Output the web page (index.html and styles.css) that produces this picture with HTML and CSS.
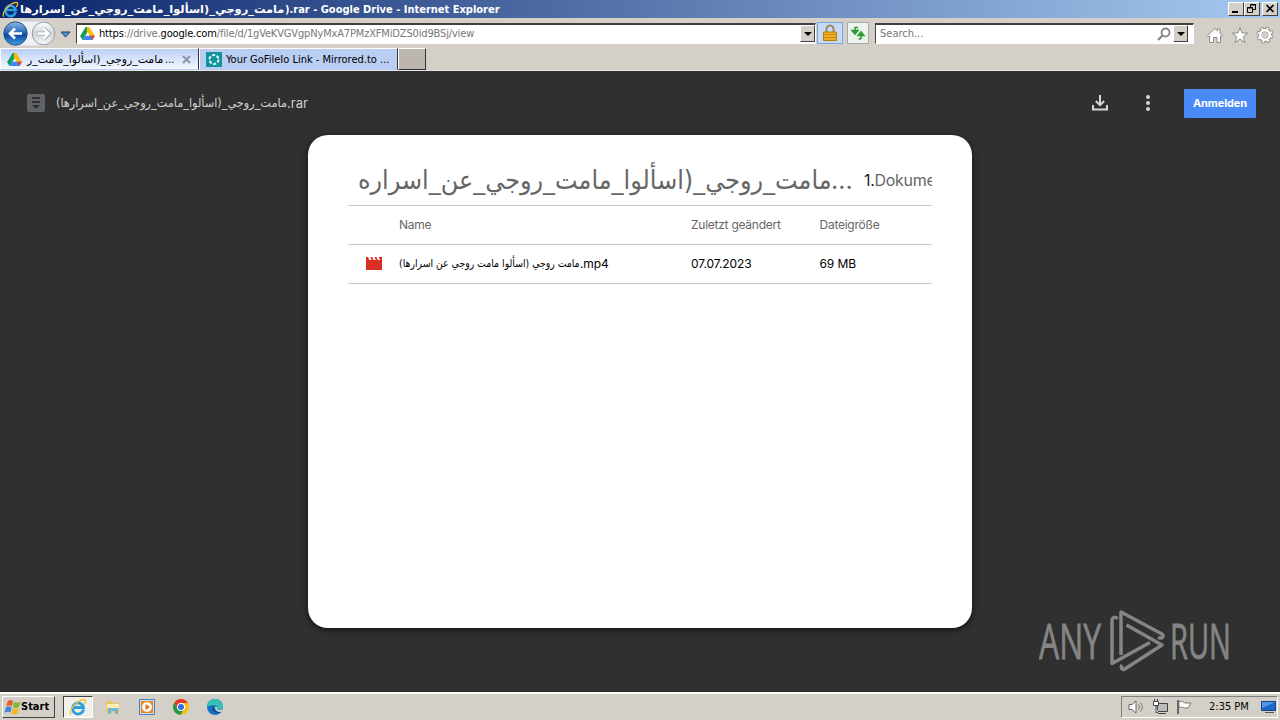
FILE: index.html
```
<!DOCTYPE html>
<html lang="de">
<head>
    <meta charset="UTF-8">
    <meta name="viewport" content="width=device-width, initial-scale=1.0">
    <title>Google Drive</title>
    <link rel="stylesheet" href="styles.css">
</head>
<body>
    <svg width="0" height="0" class="defs">
        <symbol id="drive" viewBox="0 0 16 14">
            <path d="M8 0C6 0 5.500.500 5 1.500L0 10l2.700 4L8 5.500z" fill="#109d58"/>
            <path d="M8 0c2 0 2.500.500 3 1.500L16 10h-5.300L7 3.500z" fill="#fbbc04"/>
            <path d="M4.800 9.500H16L13.300 14H2.700z" fill="#4285f4"/>
            <path d="M13.300 14 16 9.500h-5.300z" fill="#ea4335"/>
        </symbol>
        <symbol id="ie" viewBox="0 0 18 18">
            <path d="M14.500 11.500A5.500 5.500 0 1 1 14.500 9.500H5" fill="none" stroke="#2a9fe0" stroke-width="2.800"/>
            <path d="M2 16.500C-1 13 8 2 15 1.500c3 0 1 4 0 5" fill="none" stroke="#f2c230" stroke-width="1.300"/>
        </symbol>
    </svg>

    <header class="titlebar">
        <svg class="title-icon" width="17" height="17"><use href="#ie"/></svg>
        <span class="title-text"><span class="title-name"><bdi class="stretch" dir="rtl">مامت_روجي_(اسألوا_مامت_روجي_عن_اسرارها</bdi></span><span class="title-app">).rar - Google Drive - Internet Explorer</span></span>
        <div class="win-buttons">
            <span class="win-btn"><svg width="14" height="11"><path d="M3 8h6v2H3z"/></svg></span>
            <span class="win-btn"><svg width="14" height="11"><path d="M5.500 4V1.500h5v5H8M5 2h6M2.500 4.500h5v5h-5zM2 5h6" fill="none" stroke="#000"/></svg></span>
            <span class="win-btn close"><svg width="14" height="11"><path d="m3.500 2 7 7m0-7-7 7" stroke="#000" stroke-width="1.600"/></svg></span>
        </div>
    </header>

    <nav class="navbar">
        <svg class="nav-arrows" width="76" height="27">
            <defs><linearGradient id="blue" x2="0" y2="1"><stop stop-color="#8db9ea"/><stop offset=".5" stop-color="#1e5fb4"/><stop offset=".55" stop-color="#0d469b"/><stop offset="1" stop-color="#3fa0ec"/></linearGradient>
            <linearGradient id="grey" x2="0" y2="1"><stop stop-color="#fff"/><stop offset=".5" stop-color="#cfd4da"/><stop offset="1" stop-color="#f5f7fa"/></linearGradient></defs>
            <path d="M15 1.500h28a12 12 0 0 1 0 24H15z" fill="#edf0f4"/>
            <circle cx="15.500" cy="13.500" r="11.700" fill="url(#blue)" stroke="#29527f"/>
            <path d="M22 13.500H10m5-5-5 5 5 5" fill="none" stroke="#fff" stroke-width="2.700"/>
            <circle cx="43.500" cy="13.500" r="11.300" fill="url(#grey)" stroke="#8f99a5"/>
            <path d="M37 13.500h12m-5-5 5 5-5 5" fill="none" stroke="#a7b0ba" stroke-width="3.800"/>
            <path d="M37.500 13.500h11m-5-5 5 5-5 5" fill="none" stroke="#fff" stroke-width="2.400"/>
            <path d="M61 12h9l-4.500 5z" fill="#4c95d4" stroke="#1f3f66"/>
        </svg>
        <div class="field address">
            <svg width="15" height="13"><use href="#drive"/></svg>
            <span class="url"><b>https</b>://drive.<b>google.com</b>/file/d/1gVeKVGVgpNyMxA7PMzXFMiDZS0id9BSj/view</span>
            <span class="drop"></span>
        </div>
        <span class="lock"><svg width="14" height="18"><path d="M3.500 9V5a3.500 3.500 0 0 1 7 0v4" fill="none" stroke="#a08a58" stroke-width="2"/><path d="M.500 8h13v8.500H.500z" fill="#eeae20" stroke="#b57c10"/><path d="M1 10.500h12M1 13.500h12" stroke="#c98c12"/></svg></span>
        <span class="refresh"><svg width="18" height="18"><path d="M6 3.500h3M6 3v5M3 6.500 6 10l3-3.500zM12 15H9.500M12 15v-5M9 11.500 12 8l3 3.500z" fill="#2c9a37" stroke="#2c9a37" stroke-width="1.500"/></svg></span>
        <div class="field search">
            <span class="placeholder">Search...</span>
            <svg width="14" height="14"><circle cx="8.500" cy="5.500" r="4" fill="none" stroke="#858585" stroke-width="1.800"/><path d="M5.500 8.500 1 13" stroke="#858585" stroke-width="2.200"/></svg>
            <span class="drop"></span>
        </div>
        <div class="tools">
            <svg width="18" height="18"><path d="m1.500 9.500 7.500-7 2.500 2.300V3H14v4.200l2.500 2.300-1 1.200-1-.8v6.600H11V11.500H7.500v5H3.700V9.900l-1 .8z" fill="#fff" stroke="#8c8c8c"/></svg>
            <svg width="18" height="18"><path d="m9 1.500 2 5.500h5.800l-4.600 3.600 1.700 5.900L9 13l-4.900 3.500 1.700-5.900L1.200 7H7z" fill="#fff" stroke="#8c8c8c"/></svg>
            <svg width="18" height="18"><g fill="none"><circle cx="9" cy="9" r="6.500" stroke="#8c8c8c" stroke-width="4" stroke-dasharray="3 2.105"/><circle cx="9" cy="9" r="5" stroke="#8c8c8c" stroke-width="4"/><circle cx="9" cy="9" r="6.300" stroke="#fff" stroke-width="2.800" stroke-dasharray="1.700 3.248" stroke-dashoffset="-.6"/><circle cx="9" cy="9" r="4.700" stroke="#fff" stroke-width="2.600"/></g></svg>
        </div>
    </nav>

    <div class="tabs">
        <div class="tab active">
            <svg width="15" height="13"><use href="#drive"/></svg>
            <span class="tab-arabic"><bdi class="stretch" dir="rtl">مامت_روجي_(اسألوا_مامت_ر</bdi></span><span class="dots">...</span>
            <svg class="tab-close" width="9" height="9"><path d="m1 1 7 7m0-7L1 8" stroke="#8d96a8" stroke-width="2"/></svg>
        </div>
        <div class="tab">
            <svg width="16" height="15"><path d="M0 0h16v15H0z" fill="#14929c"/><circle cx="8" cy="7.500" r="4.500" fill="none" stroke="#e3ffff" stroke-width="2" stroke-dasharray="3 1.700"/></svg>
            <span class="tab-label">Your GoFileIo Link - Mirrored.to ...</span>
        </div>
        <div class="new-tab"></div>
    </div>

    <main class="viewer">
        <div class="viewer-bar">
            <svg width="18" height="18"><rect width="18" height="18" rx="2" fill="#5f6368"/><path d="M5 4h8M5 8h8" stroke="#303030" stroke-width="2"/><path d="M5 11h8l-4 4z" fill="#303030"/></svg>
            <span class="file-title"><bdi class="stretch" dir="rtl">مامت_روجي_(اسألوا_مامت_روجي_عن_اسرارها)</bdi></span><span class="file-ext">.rar</span>
            <svg class="download" width="18" height="18"><path d="M9 1v10M4.800 7 9 11.200 13.200 7M2 11v4.500h14V11" fill="none" stroke="#d6d6d6" stroke-width="2"/></svg>
            <svg class="more" width="6" height="18"><g fill="#d6d6d6"><circle cx="3" cy="3" r="2"/><circle cx="3" cy="9" r="2"/><circle cx="3" cy="15" r="2"/></g></svg>
            <button class="login">Anmelden</button>
        </div>

        <section class="card">
            <div class="card-head">
                <span class="card-title"><bdi class="stretch" dir="rtl">مامت_روجي_(اسألوا_مامت_روجي_عن_اسراره</bdi></span><span class="card-dots">...</span>
                <span class="doc-count"><span class="num">1.</span>Dokumente</span>
            </div>
            <div class="row head">
                <span></span><span class="name">Name</span><span>Zuletzt geändert</span><span>Dateigröße</span>
            </div>
            <div class="row">
                <svg width="16" height="13"><path d="M0 0h2l1.500 3H5.700L4.200 0h2l1.500 3h2.200L8.400 0h2l1.500 3h2.200L12.600 0H16v13H0z" fill="#d93025"/></svg>
                <span class="name"><span class="row-arabic"><bdi class="stretch" dir="rtl">مامت روجي (اسألوا مامت روجي عن اسرارها)</bdi></span>.mp4</span><span>07.07.2023</span><span>69 MB</span>
            </div>
        </section>

        <svg class="watermark" width="194" height="64" viewBox="0 0 194 64">
            <text x="0" y="50" textLength="62" lengthAdjust="spacingAndGlyphs">ANY</text>
            <g fill="none" stroke="#858585" stroke-width="3.500" stroke-linejoin="round">
                <path d="M78.500 10c-2-3-5.500-2-5.500 2v42.500l38-21"/>
                <path d="M82 46V3l41 22c3 3-1 5-4 3.500"/>
                <path d="M87.500 16 123 36 85 60.500c-3 0-3-3-2-4.500"/>
            </g>
            <text x="131" y="50" textLength="61" lengthAdjust="spacingAndGlyphs">RUN</text>
        </svg>
    </main>

    <footer class="taskbar">
        <div class="start">
            <svg width="17" height="16" viewBox="0 0 15 15"><path d="M3 2q3-2 5 0L7 7Q4 5 1.500 7z" fill="#e8612c"/><path d="M9 2.500q3 2 6 0L13.500 7.500q-3 2-5.500 0z" fill="#7db838"/><path d="M1.300 8Q4 6 6.700 8l-1.200 5Q3 11 0 13z" fill="#3e86d8"/><path d="M7.800 8.500q3 2 5.500 0L12 13.500q-3 2-5.500 0z" fill="#f4b81f"/></svg>
            Start
        </div>
        <div class="task-active"><svg width="18" height="18"><use href="#ie"/></svg></div>
        <div class="quick">
            <svg width="16" height="16"><path d="M1 2h6l1 2h6v10H1z" fill="#e9c961"/><path d="M2 5h12v4H2z" fill="#fbeeb0"/><path d="M3 15V9h10v6h-3v-3H6v3z" fill="#6db6dc"/></svg>
            <svg width="16" height="16"><path d="M.5.5h15v15H.5z" fill="#c6dcf2" stroke="#4b83bd"/><path d="M2 2h12v12H2z" fill="#f08519"/><circle cx="8" cy="8" r="5" fill="#fff"/><path d="m6.500 5 4.500 3-4.500 3z" fill="#e66f0e"/></svg>
            <svg width="16" height="16"><circle cx="8" cy="8" r="8" fill="#fbc116"/><path d="M8 8 4.500 10 1 4a8 8 0 0 1 14 0H8z" fill="#e33b2e"/><path d="M1 4a8 8 0 0 0 6.500 12L11 10H5z" fill="#229a4b"/><circle cx="8" cy="8" r="4" fill="#fff"/><circle cx="8" cy="8" r="3" fill="#2c70e3"/></svg>
            <svg width="16" height="16"><circle cx="8" cy="8" r="8" fill="#1273c4"/><path d="M0 8a8 8 0 0 1 16-.5c0 4-5 4-6 2.500 1-2 0-4-3-4S1 7 0 8z" fill="#35bfb5"/><path d="M6 7c-2 3 0 7 5 7 2 0 3-1 3.500-1.500C10 14 7 11 6 7z" fill="#0a4b94"/><path d="M8 8c1-1 3 0 2 2 1 1.500 4 1.500 6 0-.5 2-1 2.500-2 3-4 0-6-2-6-5z" fill="#d4d0c8"/></svg>
        </div>
        <div class="tray">
            <svg width="17" height="16"><path d="M1 5.500h3L8 2v12l-4-3.500H1z" fill="#fff" stroke="#666"/><path d="M10.500 5.500q2 2.500 0 5M12.500 3.500q3.500 4.500 0 9" fill="none" stroke="#777"/></svg>
            <svg width="17" height="16"><path d="M5.500 4.500h10v8h-10z" fill="#bbb" stroke="#444"/><path d="M1.500 2.500h5v4h-5zM2.500 0v2M5.500 0v2M4 7v6.500h2" fill="#fff" stroke="#444"/><path d="M6 14.500h8" stroke="#444"/></svg>
            <svg width="17" height="16"><path d="M2 1v14" stroke="#666" stroke-width="2"/><path d="M3 2.500c3-1 5 1 6 1.500h6l-3 5H8c-2-1-3-1-5-.5z" fill="#fff" stroke="#777"/></svg>
            <span class="clock">2:35 PM</span>
            <svg width="15" height="14"><path d="M.500 1.500h14v9H.500z" fill="#1f66c6" stroke="#15438c"/><path d="M1 2h13L1 8z" fill="#5597e4"/><path d="M4 12.500h9" stroke="#555"/></svg>
        </div>
    </footer>
</body>
</html>
```
FILE: styles.css
```
:root {
    --chrome: #d4d0c8;
    --page: #303030;
    --ui: "DejaVu Sans Condensed", "DejaVu Sans", sans-serif;
}

* {
    margin: 0;
    padding: 0;
    box-sizing: border-box;
}

body {
    width: 1280px;
    height: 720px;
    overflow: hidden;
    display: flex;
    flex-direction: column;
    font-family: var(--ui);
    font-size: 11px;
    background: var(--page);
}

svg {
    flex-shrink: 0;
    display: block;
}

.defs {
    position: absolute;
}

.stretch {
    display: inline-block;
    transform-origin: left center;
}

.titlebar {
    height: 18px;
    display: flex;
    align-items: center;
    padding: 0 2px;
    background: linear-gradient(90deg, #0a246a, #a6caf0);
    color: #fff;
}

.title-text {
    display: flex;
    margin-left: 1px;
    font-weight: bold;
    white-space: nowrap;
}

.title-name {
    width: 265px;
}

.title-name .stretch {
    transform: scaleX(1.15);
}

.win-buttons {
    display: flex;
    margin-left: auto;
}

.win-btn {
    width: 16px;
    height: 14px;
    background: var(--chrome);
    border: 1px solid;
    border-color: #fff #404040 #404040 #fff;
}

.close {
    margin-left: 2px;
}

.navbar {
    height: 30px;
    display: flex;
    align-items: center;
    background: var(--chrome);
}

.field {
    height: 21px;
    display: flex;
    align-items: center;
    background: #fff;
    border: 1px solid;
    border-color: #404040 #fff #fff #404040;
    border-top-width: 2px;
    color: #777;
}

.address {
    width: 740px;
    padding-left: 3px;
}

.url {
    margin-left: 4px;
    letter-spacing: -0.155px;
    white-space: nowrap;
}

.url b {
    font-weight: normal;
    color: #000;
}

.drop {
    width: 15px;
    height: 17px;
    margin-left: auto;
    display: flex;
    align-items: center;
    justify-content: center;
    background: var(--chrome);
    border: 1px solid;
    border-color: #fff #404040 #404040 #fff;
}

.drop::after {
    content: "";
    border: 4px solid transparent;
    border-top-color: #000;
    border-bottom: 0;
}

.lock {
    width: 26px;
    height: 22px;
    margin-left: 1px;
    display: grid;
    place-items: center;
    background: #c5daf5;
    border: 1px solid #78a8dc;
}

.refresh {
    width: 22px;
    height: 22px;
    margin-left: 4px;
    display: grid;
    place-items: center;
    background: #eef2ed;
    border: 1px solid #aaa;
}

.search {
    width: 319px;
    margin-left: 6px;
    padding: 0 5px 0 4px;
}

.placeholder {
    margin-right: auto;
}

.search .drop {
    margin-left: 2px;
}

.tools {
    display: flex;
    gap: 7px;
    margin: 3px 0 0 12px;
}

.tabs {
    height: 23px;
    display: flex;
    background: var(--chrome);
    border-bottom: 1px solid #e8e6e2;
}

.tab {
    width: 199px;
    display: flex;
    align-items: center;
    padding-left: 6px;
    background: #bacdf3;
    border: 1px solid;
    border-color: #fff #333 #bacdf3 #fff;
    white-space: nowrap;
}

.active {
    background: linear-gradient(#b9cff6, #f4f8ff);
}

.tab-arabic {
    margin-left: 5px;
    width: 138px;
}

.tab-arabic .stretch {
    transform: scaleX(1.1);
}

.tab-close {
    margin-left: auto;
    margin-right: 7px;
}

.tab-label {
    margin-left: 4px;
}

.new-tab {
    width: 28px;
    background: #bcb6ae;
    border: 1px solid;
    border-color: #fff #333 #333 #fff;
}

.viewer {
    flex: 1;
    position: relative;
    background: var(--page);
}

.viewer-bar {
    height: 64px;
    display: flex;
    align-items: center;
    padding: 0 24px 0 27px;
    font-family: Inter, sans-serif;
    color: #d0d0d0;
}

.file-title {
    margin-left: 11px;
    width: 231px;
    font: 12px var(--ui);
    white-space: nowrap;
}

.file-title .stretch {
    transform: scaleX(1.045);
}

.file-ext {
    font-size: 13px;
}

.download {
    margin-left: auto;
}

.more {
    margin-left: 36px;
}

.login {
    width: 72px;
    height: 29px;
    margin-left: 33px;
    border: 0;
    border-radius: 1px;
    background: #4a8af6;
    color: #fff;
    font: bold 11px Inter, sans-serif;
    letter-spacing: -0.1px;
}

.card {
    width: 664px;
    height: 493px;
    margin: 0 auto;
    padding: 20px 40px;
    border-radius: 20px;
    background: #fff;
    box-shadow: 0 2px 6px rgba(0, 0, 0, 0.6);
    font: 12px Inter, sans-serif;
    color: #000;
}

.card-head {
    height: 51px;
    display: flex;
    align-items: center;
    padding-left: 10px;
    overflow: hidden;
    color: #666;
    white-space: nowrap;
    border-bottom: 1px solid #c7c7c7;
}

.card-head > span {
    flex-shrink: 0;
}

.card-title {
    width: 473px;
    font: 26px var(--ui);
}

.card-title .stretch {
    transform: scaleX(1.024);
}

.card-dots {
    width: 23px;
    font-size: 25px;
}

.doc-count {
    margin-left: 10px;
    font-size: 16px;
    letter-spacing: -0.3px;
}

.num {
    color: #222;
}

.row {
    height: 39px;
    display: grid;
    grid-template-columns: 33px 292px 128.5px 1fr;
    align-items: center;
    padding: 0 0 2px 18px;
    border-bottom: 1px solid #c7c7c7;
    letter-spacing: -0.1px;
    white-space: nowrap;
}

.head {
    color: #666;
    letter-spacing: -0.25px;
}

.name {
    display: flex;
    align-items: center;
}

.row-arabic {
    width: 181px;
    font: 11px var(--ui);
    letter-spacing: 0;
}

.row-arabic .stretch {
    transform: scaleX(0.942);
}

.watermark {
    position: absolute;
    left: 1039px;
    top: 538px;
}

.watermark text {
    font: 49px "Open Sans", sans-serif;
    fill: #858585;
    stroke: #858585;
    stroke-width: 0.8px;
}

.taskbar {
    height: 28px;
    display: flex;
    align-items: center;
    padding: 0 2px 1px;
    background: var(--chrome);
    border-top: 2px solid #fff;
}

.start {
    width: 53px;
    height: 22px;
    display: flex;
    align-items: center;
    padding-left: 1px;
    font-weight: bold;
    border: 1px solid;
    border-color: #fff #404040 #404040 #fff;
}

.task-active {
    width: 30px;
    height: 22px;
    margin-left: 8px;
    display: grid;
    place-items: center;
    background: #f1f0ed;
    border: 1px solid;
    border-color: #404040 #fff #fff #404040;
}

.quick {
    display: flex;
    gap: 18px;
    margin-left: 12px;
}

.tray {
    width: 157px;
    height: 22px;
    margin-left: auto;
    display: flex;
    align-items: center;
    gap: 7px;
    padding-left: 6px;
    border: 1px solid;
    border-color: #808080 #fff #fff #808080;
}

.clock {
    width: 40px;
    margin: 0 5px 0 9px;
    white-space: nowrap;
}
```
